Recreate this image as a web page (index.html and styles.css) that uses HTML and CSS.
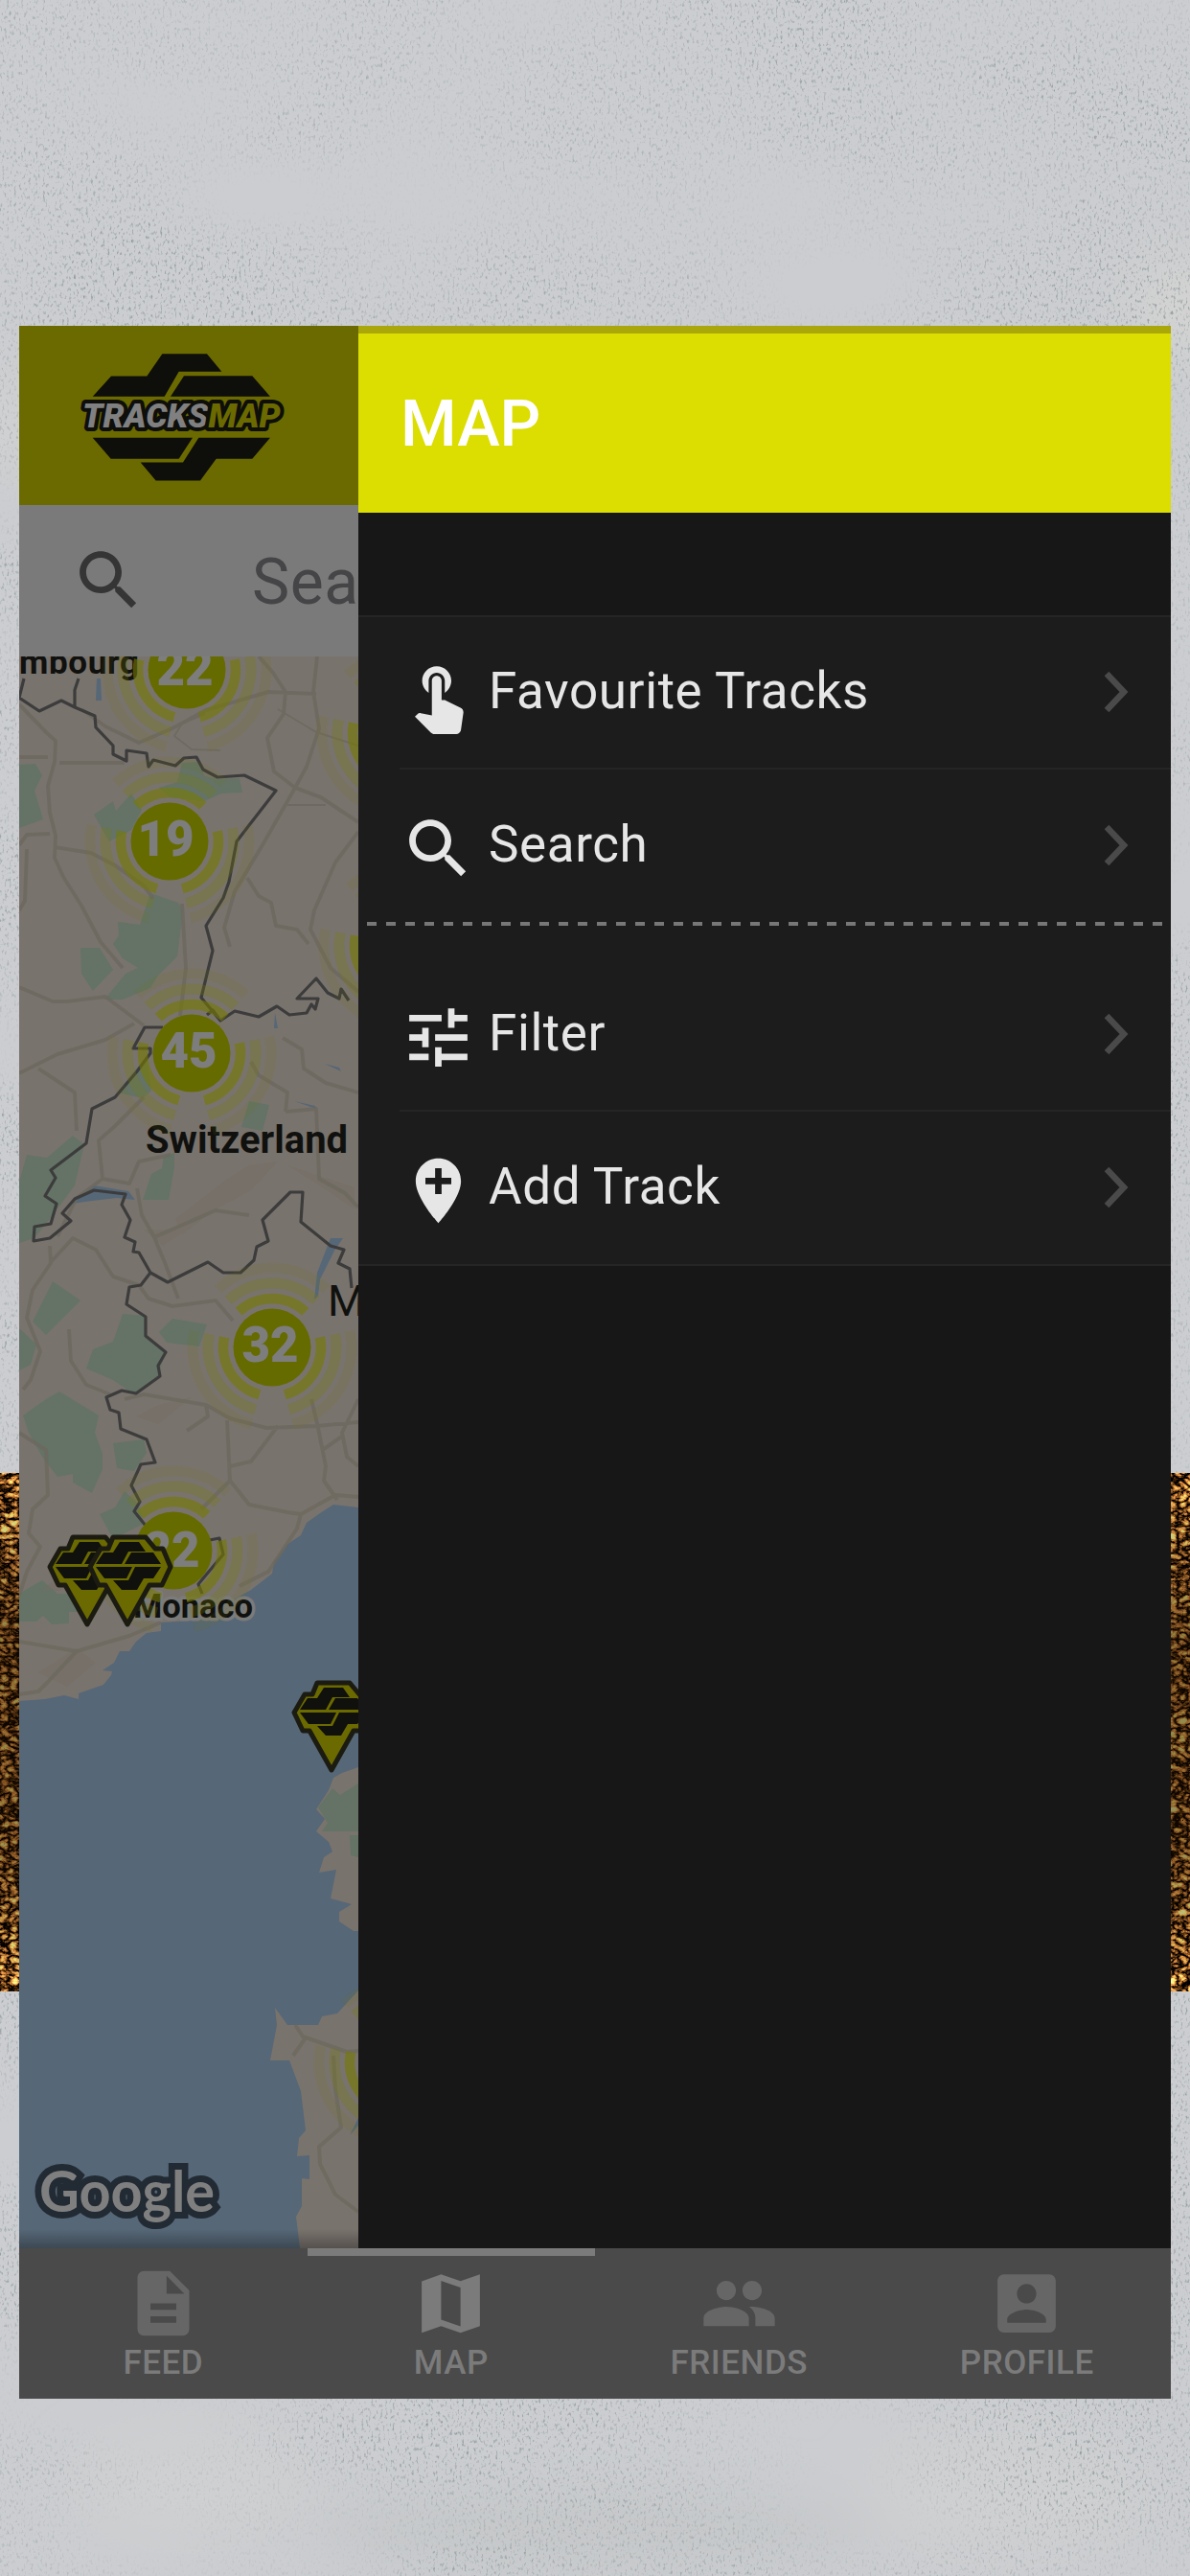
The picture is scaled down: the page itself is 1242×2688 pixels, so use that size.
FILE: index.html
```html
<!DOCTYPE html>
<html lang="en">
<head>
  <meta charset="UTF-8" />
  <meta name="viewport" content="width=device-width, initial-scale=1.0" />
  <title>Tracksmap</title>
  <link rel="stylesheet" href="styles.css">
</head>
<body>

  <!-- concrete wall with a strip of dirt behind the phone -->
  <svg class="backdrop" width="1242" height="2688" viewBox="0 0 1242 2688" aria-hidden="true">
    <defs>
      <filter id="specks" x="0" y="0" width="100%" height="100%" color-interpolation-filters="sRGB">
        <feTurbulence type="fractalNoise" baseFrequency=".4 .24" numOctaves="2" seed="4" result="fine" />
        <feColorMatrix in="fine" values="0 0 0 0 .5  0 0 0 0 .55  0 0 0 0 .56  2.6 0 0 0 -1.45" result="dots" />
        <feTurbulence type="fractalNoise" baseFrequency=".003 .007" numOctaves="2" seed="9" />
        <feColorMatrix values="0 0 0 0 0  0 0 0 0 0  0 0 0 0 0  0 2.5 0 0 -.65" result="patches" />
        <feComposite in="dots" in2="patches" operator="in" />
      </filter>
      <filter id="dirt" x="0" y="0" width="100%" height="100%" color-interpolation-filters="sRGB">
        <feTurbulence type="turbulence" baseFrequency=".1 .14" numOctaves="3" seed="7" />
        <feColorMatrix values="3.2 0 0 0 -.42  2.1 0 0 0 -.3  1.1 0 0 0 -.2  0 0 0 0 1" />
      </filter>
      <linearGradient id="dirtShade" x1="0" y1="0" x2="0" y2="1">
        <stop offset="0" stop-color="#000" stop-opacity="0" />
        <stop offset=".3" stop-color="#1a0d00" stop-opacity=".5" />
        <stop offset=".75" stop-color="#1a0d00" stop-opacity=".45" />
        <stop offset="1" stop-color="#000" stop-opacity="0" />
      </linearGradient>
      <filter id="soft"><feGaussianBlur stdDeviation="28" /></filter>
    </defs>
    <rect width="1242" height="2688" fill="#cbcdd0" />
    <g filter="url(#soft)" fill="#d3d3d2">
      <ellipse cx="1240" cy="320" rx="60" ry="50" />
      <ellipse cx="0" cy="440" rx="26" ry="50" />
      <ellipse cx="200" cy="2590" rx="120" ry="50" fill="#cfd0d1" />
      <ellipse cx="620" cy="2640" rx="300" ry="40" fill="#c5c7c9" />
      <ellipse cx="1050" cy="2600" rx="140" ry="60" fill="#cfd0d1" />
    </g>
    <rect width="1242" height="2688" filter="url(#specks)" />
    <rect y="1537" width="1242" height="541" filter="url(#dirt)" />
    <rect y="1537" width="1242" height="541" fill="url(#dirtShade)" />
  </svg>

  <div class="phone">
    <div class="screen">
      <div class="page">
        <header class="brand">
          <svg class="logo" viewBox="240 140 660 412">
            <g fill="#0e0e0b">
              <path d="M290 282 348 218H460L508 148H648L694 204H560L515 282Z" />
              <path d="M534 282 576 217H790L846 282Z" />
              <path d="M290 411H603L560 477H347Z" />
              <path d="M622 411H846L790 477H677L627 545H488L440 488H573Z" />
            </g>
            <text class="logo-text" x="258" y="380" textLength="620" lengthAdjust="spacingAndGlyphs"><tspan fill="#808080">TRACKS</tspan><tspan fill="#6b6a00">MAP</tspan></text>
          </svg>
        </header>

        <div class="searchbar">
          <svg class="icon" viewBox="0 0 24 24"><use href="#iconSearch" /></svg>
          <span class="placeholder">Search</span>
        </div>

        <svg class="map" viewBox="20 685 354 1661">
          <defs>
            <g id="cluster" fill="none" stroke="#777a00">
              <circle r="83" stroke-width="11" opacity=".1" pathLength="360" stroke-dasharray="86 35 87 30 87 35" transform="rotate(-133)" />
              <circle r="67" stroke-width="11" opacity=".25" pathLength="360" stroke-dasharray="86 35 87 30 87 35" transform="rotate(-133)" />
              <circle r="51" stroke-width="10.5" opacity=".6" pathLength="360" stroke-dasharray="86 35 87 30 87 35" transform="rotate(-133)" />
              <circle r="40.5" fill="#666b00" stroke="none" />
            </g>
            <!-- tip of the pin is at 0,0 -->
            <g id="pin">
              <path d="M-15-93H19L29-81H37L45-62 36-43H23L0-2-23-43H-30L-39-62-28-81H-20Z" fill="#6b6a00" stroke="#1b1b12" stroke-width="5" stroke-linejoin="round" />
              <path d="M-33-65-25-77H-15L-8-88H12L19-78H1L-6-65ZM-3-65 4-77H27L35-65ZM-33-62H5L-1-50H-24ZM8-62H35L27-50H17L10-38H-6L-15-48H1Z" fill="#10100c" />
            </g>
            <linearGradient id="foot" x1="0" y1="0" x2="0" y2="1">
              <stop offset="0" stop-color="#000" stop-opacity="0" />
              <stop offset="1" stop-color="#000" stop-opacity=".3" />
            </linearGradient>
          </defs>

          <rect x="20" y="685" width="354" height="1661" fill="#79736d" />

          <!-- coast and lakes -->
          <g fill="#566777">
            <path d="M20 1775 47 1773 67 1769 82 1773V1767L108 1758 116 1748 117 1744 107 1743 119 1735 125 1723 135 1723 142 1713 153 1704 168 1702V1693L205 1691 262 1659 284 1642 286 1630 299 1612 314 1602 320 1589 334 1579 348 1570 374 1573V1844L357 1850 348 1855 343 1868 330 1888 339 1898 330 1911 343 1922 347 1932 338 1938 333 1954 351 1951 345 1981 367 1987 354 1995V2005L369 2015H374V2077L352 2101 336 2104 332 2113H300L287 2095 289 2113 282 2150H302L314 2182 319 2223 312 2231 310 2250 323 2249V2274L315 2273V2302L309 2313 313 2346H20Z" />
            <path d="M75 1256 98 1237 134 1243 141 1252 122 1250 96 1253Z" />
            <path d="M345 1292H358L349 1305 334 1335 332 1352 328 1356 331 1328Z" />
            <path d="M101 708H105L106 731H100ZM339 1110 354 1114 356 1118ZM307 1149 329 1154 330 1157ZM287 1057 290 1073H286ZM365 2228 374 2210V2218Z" />
          </g>

          <g fill="#647366">
            <path d="M20 798 37 797 44 809 36 825 45 855 20 864Z" />
            <path d="M190 796 206 795 214 810 228 813 250 812 253 827 231 828 213 836 177 832 166 822 185 816Z" />
            <path d="M98 850 118 836 121 846 137 828 148 845 137 866 114 878Z" />
            <path d="M157 932 186 942 191 950 185 998 165 1018 157 1031 128 1043 109 1043 131 1016 144 1010 128 1000 118 985 124 976 123 962 146 965Z" />
            <path d="M84 989 104 989 118 1012 97 1034 85 1016Z" />
            <path d="M28 1205 49 1208 76 1185 88 1194 78 1237 55 1268 36 1292 20 1297V1233Z" />
            <path d="M55 1337 84 1357 48 1393 34 1379Z" />
            <path d="M20 1386 38 1403 32 1424 20 1430Z" />
            <path d="M171 1206 182 1203V1218L176 1252H149L158 1225 169 1219Z" />
            <path d="M260 1149 281 1153 274 1180 252 1176Z" />
            <path d="M153 1103 138 1120 122 1140 149 1146 158 1138Z" />
            <path d="M128 1371 152 1373 152 1394 172 1412 165 1437 140 1455 118 1440 90 1428 97 1408 118 1400Z" />
            <path d="M180 1376 216 1382 208 1405 174 1401 166 1390Z" />
            <path d="M24 1477 48 1460 62 1452 103 1477 99 1495 107 1517V1533L96 1558 76 1547V1538L60 1541 44 1520 30 1495Z" />
            <path d="M118 1506 150 1502 153 1516 140 1535 122 1532Z" />
            <path d="M20 1663 44 1649 60 1663H113L97 1682H72V1694L54 1695 45 1686 38 1692 20 1692Z" />
            <path d="M104 1580 120 1573 130 1556 145 1570 150 1590 118 1606Z" />
            <path d="M332 1886 347 1866 355 1873 374 1861V1911H336L342 1902ZM365 1915H374V1938L366 1936Z" />
          </g>

          <!-- relief -->
          <g fill="#736c61" opacity=".45">
            <path d="M183 1272 236 1231 260 1216 290 1212 262 1242 225 1262 190 1288ZM300 1216 370 1239V1262L335 1238ZM40 1660 90 1630 100 1645 62 1660ZM40 1745 80 1720 100 1735 70 1760ZM150 1283 172 1283 205 1277 170 1300ZM142 1478 165 1466 200 1458 165 1486Z" />
          </g>

          <!-- roads -->
          <g fill="none" stroke="#6c685e" stroke-width="4" opacity=".75" stroke-linejoin="round">
            <path d="M20 735 49 765 58 773 57 795 50 820 52 848 58 872 57 895 66 915 85 945 105 983 128 1010M20 790H50M62 796H130M20 882 28 871 52 870M20 950 26 940 28 886M57 884 95 890 120 903 150 924 160 938" />
            <path d="M85 740 110 758 145 775 180 760 215 741 280 722 330 724M270 685 285 702 298 722 296 745 279 770 286 805 308 822 335 832 350 842 374 858M331 685 327 722 333 760 320 800 308 822 275 880 245 930 234 968 240 988" />
            <path d="M290 740 310 752 330 764 374 778M214 745 190 755 182 768 200 782 230 783M340 840 300 840" stroke-width="2" />
            <path d="M374 868 350 900 328 950 324 970 345 1010 374 1035M258 916 270 935 283 942 288 966 310 970 322 985M190 943 194 1010 188 1060M20 1120 60 1100 110 1085 140 1068M20 1030 55 1045 70 1045 110 1040 150 1070M40 1115 78 1140 80 1180" />
            <path d="M295 1083 315 1095 317 1115 340 1130 374 1140M298 1160 330 1157 333 1230 360 1245 374 1260M298 1160 300 1140 270 1122 262 1108M107 1230 103 1190 120 1175 150 1145M107 1230 135 1235 145 1212 178 1205M60 1290 80 1250 107 1230M52 1300 53 1318 34 1346 28 1375 42 1410 32 1440 24 1450M52 1318 76 1292 100 1304 118 1332 145 1341 155 1355 180 1363 225 1357 243 1378M72 1387 74 1420 90 1445 115 1455M143 1240 148 1268 161 1291 200 1274 225 1263 260 1268M161 1291 173 1320 186 1355" />
            <path d="M20 1495 48 1513 50 1560 34 1575 30 1600 42 1614 28 1640 20 1665M130 1460 150 1455 215 1466 240 1480 278 1490 330 1488 374 1484M215 1466 217 1478 195 1493M237 1482 240 1545 260 1570 300 1578 314 1580M290 1488 262 1525 240 1530M325 1460 332 1490 340 1530 338 1545 352 1565M374 1460 357 1495 362 1520 374 1530M338 1512 358 1498M314 1580 310 1595 280 1640 250 1655M314 1580 350 1560 374 1562M240 1545 210 1575M20 1713 80 1723 135 1707 168 1693M80 1723 50 1755 40 1765 20 1768" />
            <path d="M308 2113 316 2125 362 2141 374 2140M320 2125 306 2145M348 2145 350 2180 356 2220 333 2240 334 2258 350 2290 374 2308" />
          </g>

          <!-- borders -->
          <g fill="none" stroke="#3c3c3c" stroke-width="3.2" stroke-linejoin="round">
            <path d="M25 708 20 728 41 742 64 731 78 738 99 747 100 759 118 778V787L132 794V783L153 786 155 800 160 793 183 799 192 791 205 790 212 803 227 811 255 809 288 825 247 878 239 920 233 937 215 966 222 992 210 1041 230 1065 245 1055 270 1061 289 1050 302 1059 320 1057 325 1048 329 1053 332 1042H310L330 1021 342 1036 354 1042 356 1032 364 1044" />
            <path d="M82 708 78 720V737M216 1059 222 1054 228 1062M170 1072H151L139 1094H157V1099L143 1118 120 1145 96 1157 90 1193 53 1221 58 1229 47 1248 59 1256 53 1277 36 1280 35 1295 52 1292 74 1274 65 1266 78 1251 98 1242 131 1246 127 1257 136 1273 130 1291 141 1296 139 1306 145 1307 157 1328 175 1338 217 1317 233 1328H251L265 1315 268 1301 280 1295 274 1273 303 1244H316L314 1275 345 1300 359 1304 353 1318 365 1324 367 1344" />
            <path d="M157 1328 147 1341 135 1343 132 1361 152 1374V1394L173 1411 165 1425 167 1436 142 1454 127 1451 111 1458 115 1471 124 1474 126 1491 153 1502 162 1526 147 1528 137 1550 146 1567 140 1577 152 1592M219 1607 229 1605 233 1622 207 1653 211 1663" />
          </g>

          <g class="map-label">
            <text class="country" x="20" y="703" textLength="125">mbourg</text>
            <text x="152" y="1203" textLength="211" lengthAdjust="spacingAndGlyphs">Switzerland</text>
            <text class="town" x="342" y="1373">M</text>
          </g>
          <text class="map-label monaco" x="139" y="1688" textLength="125" lengthAdjust="spacingAndGlyphs">Monaco</text>

          <use href="#cluster" x="195" y="699" />
          <use href="#cluster" x="177" y="878" />
          <use href="#cluster" x="200" y="1099" />
          <use href="#cluster" x="284" y="1406" />
          <use href="#cluster" x="181" y="1618" />
          <use href="#cluster" x="419" y="765" />
          <use href="#cluster" x="421" y="987" />
          <use href="#cluster" x="416" y="2152" />
          <g class="map-count">
            <text x="193" y="715">22</text>
            <text x="173" y="893">19</text>
            <text x="197" y="1114">45</text>
            <text x="282" y="1421">32</text>
            <text x="179" y="1635">22</text>
          </g>

          <use href="#pin" x="91" y="1697" />
          <use href="#pin" x="133" y="1697" />
          <use href="#pin" x="346" y="1849" />

          <text class="google" x="41" y="2308" textLength="183" lengthAdjust="spacingAndGlyphs">Google</text>
          <rect x="20" y="2326" width="354" height="20" fill="url(#foot)" />
        </svg>
      </div>

      <aside class="menu">
        <div class="menu-title">MAP</div>
        <ul class="menu-list">
          <li class="menu-item">
            <svg class="icon" viewBox="0 0 24 24"><path d="M9 11.24V7.5C9 6.12 10.12 5 11.5 5S14 6.12 14 7.5v3.74c1.21-.81 2-2.18 2-3.74C16 5.01 13.99 3 11.5 3S7 5.01 7 7.5c0 1.56.79 2.93 2 3.74zm9.84 4.63l-4.54-2.26c-.17-.07-.35-.11-.54-.11H13v-6c0-.83-.67-1.5-1.5-1.5S10 6.67 10 7.5v10.74l-3.43-.72c-.08-.01-.15-.03-.24-.03-.31 0-.59.13-.79.33l-.79.8 4.94 4.94c.27.27.65.44 1.06.44h6.79c.75 0 1.33-.55 1.44-1.28l.75-5.27c.01-.07.02-.14.02-.2 0-.62-.38-1.16-.91-1.38z" /></svg>
            <span>Favourite Tracks</span>
            <svg class="chevron" viewBox="0 0 26 44"><path d="M3 3 21 22 3 41" /></svg>
          </li>
          <li class="menu-item last">
            <svg class="icon" viewBox="0 0 24 24"><path id="iconSearch" d="M15.5 14h-.79l-.28-.27C15.41 12.59 16 11.11 16 9.5 16 5.91 13.09 3 9.5 3S3 5.91 3 9.5 5.91 16 9.5 16c1.61 0 3.09-.59 4.23-1.57l.27.28v.79l5 4.99L20.49 19l-4.99-5zm-6 0C7.01 14 5 11.99 5 9.5S7.01 5 9.5 5 14 7.01 14 9.5 11.99 14 9.5 14z" /></svg>
            <span>Search</span>
            <svg class="chevron" viewBox="0 0 26 44"><path d="M3 3 21 22 3 41" /></svg>
          </li>
          <li class="divider"></li>
          <li class="menu-item">
            <svg class="icon" viewBox="0 0 24 24"><path d="M3 17v2h6v-2H3zM3 5v2h10V5H3zm10 16v-2h8v-2h-8v-2h-2v6h2zM7 9v2H3v2h4v2h2V9H7zm14 4v-2H11v2h10zm-6-4h2V7h4V5h-4V3h-2v6z" /></svg>
            <span>Filter</span>
            <svg class="chevron" viewBox="0 0 26 44"><path d="M3 3 21 22 3 41" /></svg>
          </li>
          <li class="menu-item last">
            <svg class="icon" viewBox="0 0 24 24"><path d="M12 2C8.14 2 5 5.14 5 9c0 5.25 7 13 7 13s7-7.75 7-13c0-3.86-3.14-7-7-7zm4 8h-3v3h-2v-3H8V8h3V5h2v3h3v2z" /></svg>
            <span>Add Track</span>
            <svg class="chevron" viewBox="0 0 26 44"><path d="M3 3 21 22 3 41" /></svg>
          </li>
        </ul>
      </aside>
    </div>

    <nav class="tabs">
      <div class="tab">
        <svg class="icon" viewBox="0 0 24 24"><path d="M14 2H6c-1.1 0-2 .9-2 2v16c0 1.1.9 2 2 2h12c1.1 0 2-.9 2-2V8l-6-6zm2 16H8v-2h8v2zm0-4H8v-2h8v2zm-3-5V3.5L18.5 9H13z" /></svg>
        FEED
      </div>
      <div class="tab active">
        <svg class="icon" viewBox="0 0 24 24"><path fill-rule="evenodd" d="M3 5.2 9 3l6 2.1L21 3v16l-6 2.1L9 19l-6 2.1zM9 5v12l6 2.1V7.1z" /></svg>
        MAP
      </div>
      <div class="tab">
        <svg class="icon" viewBox="0 0 24 24"><path d="M16 11c1.66 0 2.99-1.34 2.99-3S17.66 5 16 5s-3 1.34-3 3 1.34 3 3 3zm-8 0c1.66 0 2.99-1.34 2.99-3S9.66 5 8 5 5 6.34 5 8s1.34 3 3 3zm0 2c-2.33 0-7 1.17-7 3.5V19h14v-2.5c0-2.33-4.67-3.5-7-3.5zm8 0c-.29 0-.62.02-.97.05 1.16.84 1.97 1.97 1.97 3.45V19h6v-2.5c0-2.33-4.67-3.5-7-3.5z" /></svg>
        FRIENDS
      </div>
      <div class="tab">
        <svg class="icon" viewBox="0 0 24 24"><path d="M3 5v14c0 1.1.89 2 2 2h14c1.1 0 2-.9 2-2V5c0-1.1-.9-2-2-2H5c-1.11 0-2 .9-2 2zm12 4c0 1.66-1.34 3-3 3s-3-1.34-3-3 1.34-3 3-3 3 1.34 3 3zm-9 8c0-2 4-3.1 6-3.1s6 1.1 6 3.1v1H6v-1z" /></svg>
        PROFILE
      </div>
    </nav>
  </div>

</body>
</html>
```
FILE: styles.css
```css
body {
  margin: 0;
  width: 1242px;
  height: 2688px;
  overflow: hidden;
  background: #cbcdd0;
  font-family: Roboto, "Liberation Sans", sans-serif;
}

.backdrop {
  position: absolute;
  top: 0;
  left: 0;
  z-index: -1;
}

svg {
  display: block;
  flex-shrink: 0;
}

.icon {
  width: 81px;
  height: 81px;
  fill: currentColor;
}

.phone {
  width: 1202px;
  height: 2163px;
  margin: 0 auto;
  padding-top: 340px;
  display: flex;
  flex-direction: column;
}

.screen {
  display: flex;
  height: 2006px;
}

/* dimmed page on the left */
.page {
  width: 354px;
  overflow: hidden;
}

.brand {
  height: 187px;
  background: #6b6a00;
}

.logo {
  width: 220px;
  height: 137.3px;
  padding: 26.5px 0 0 60px;
}

.logo-text {
  font-size: 104px;
  font-weight: 900;
  font-style: italic;
  stroke: #0e0e0b;
  stroke-width: 24px;
  stroke-linejoin: round;
  paint-order: stroke;
}

.searchbar {
  height: 158px;
  background: #7a7a7a;
  display: flex;
  align-items: center;
  padding-left: 53px;
  color: #353535;
}

.searchbar .icon {
  margin-bottom: 2px;
}

.placeholder {
  margin-left: 109px;
  padding-top: 2px;
  font-size: 66px;
  letter-spacing: .5px;
  color: #454547;
}

.map {
  width: 354px;
  height: 1661px;
}

.map-label {
  font-size: 41px;
  font-weight: 700;
  fill: #10110e;
}

.map-label.monaco {
  font-size: 35px;
  stroke: #7b7b7a;
  stroke-width: 7px;
  stroke-linejoin: round;
  paint-order: stroke;
}

.country {
  font-size: 35px;
}

.town {
  font-size: 45px;
  font-weight: 400;
}

.map-count {
  font-size: 51px;
  font-weight: 900;
  text-anchor: middle;
  fill: #7d7d7d;
}

.google {
  font-family: Lato, sans-serif;
  font-size: 60px;
  font-weight: 700;
  fill: #7f7f7f;
  stroke: #222a33;
  stroke-width: 14px;
  paint-order: stroke;
}

/* side menu */
.menu {
  width: 848px;
  background: #171717;
}

.menu-title {
  box-sizing: border-box;
  height: 195px;
  padding: 54px 0 0 44px;
  border-top: 8px solid #a9a70a;
  background: #dcdd00;
  color: #fff;
  font-size: 67px;
  font-weight: 500;
  line-height: 80px;
}

.menu-list {
  list-style: none;
  margin: 107px 0 0;
  padding: 0;
  background: #1c1c1c;
  border-top: 2px solid #252525;
  border-bottom: 2px solid #252525;
}

.menu-item {
  box-sizing: border-box;
  height: 159px;
  margin-left: 43px;
  padding: 5px 44px 0 0;
  border-bottom: 2px solid #252525;
  display: flex;
  align-items: center;
  color: #e6e6e6;
}

.menu-item.last {
  border-bottom: none;
}

.menu-item span {
  flex: 1;
  margin-left: 12px;
  padding-bottom: 8px;
  font-size: 53px;
  letter-spacing: .6px;
}

.chevron {
  width: 26px;
  height: 44px;
  margin-bottom: 7px;
  fill: none;
  stroke: #4a4a4a;
  stroke-width: 6.5px;
}

.divider {
  height: 4px;
  margin: 0 7px 35px 9px;
  background: repeating-linear-gradient(90deg, #777 0 10px, transparent 10px 20px);
}

/* bottom tabs */
.tabs {
  display: flex;
  height: 157px;
  background: #4a4a4a;
}

.tab {
  flex: 1;
  box-sizing: border-box;
  border-top: 8px solid transparent;
  padding-top: 9px;
  display: flex;
  flex-direction: column;
  align-items: center;
  color: #7b7b7b;
  font-size: 35px;
  font-weight: 500;
  letter-spacing: .5px;
  line-height: 43px;
}

.tab .icon {
  color: #666;
}

.tab.active {
  border-top-color: #7b7b7b;
}

.tab.active .icon {
  color: #7b7b7b;
}
```
